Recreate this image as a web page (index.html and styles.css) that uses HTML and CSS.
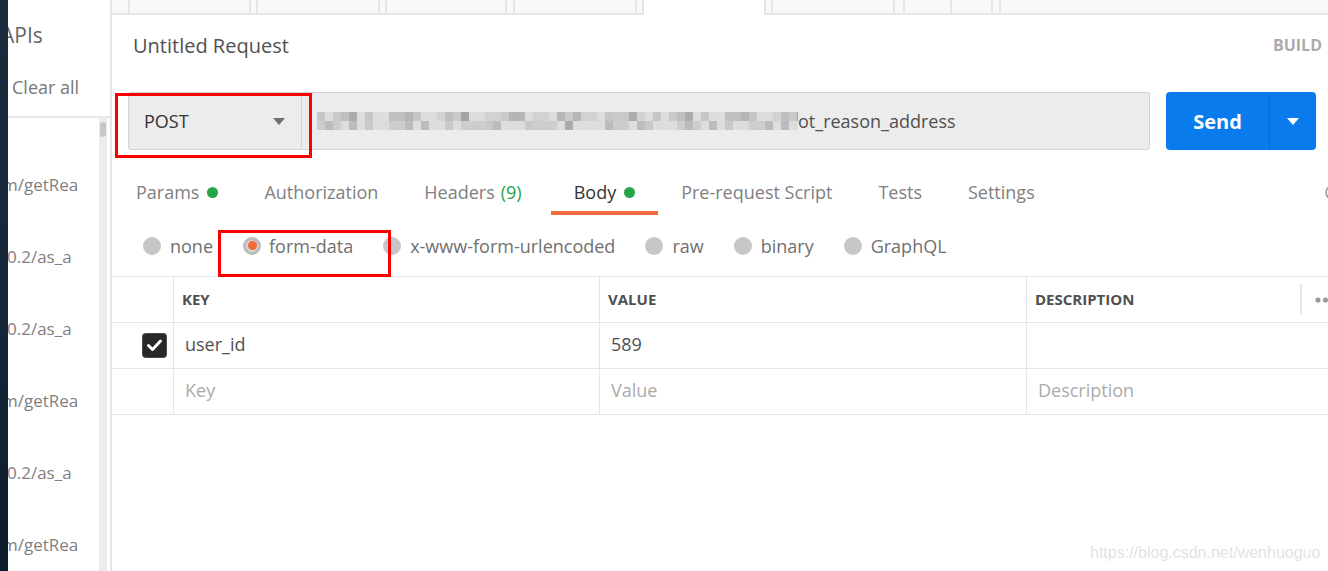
FILE: index.html
```html
<!DOCTYPE html>
<html lang="en">
<head>
    <meta charset="UTF-8">
    <meta name="viewport" content="width=device-width, initial-scale=1.0">
    <title>Untitled Request</title>
    <link rel="stylesheet" href="styles.css">
</head>
<body>
    <div class="app">
        <div class="edge"></div>

        <!-- historial a la izquierda -->
        <aside class="sidebar">
            <div class="side-head">
                <div class="side-title">APIs</div>
                <div class="side-clear">Clear all</div>
            </div>
            <div class="side-body">
                <ul class="history">
                    <li class="h-get">m/getRea</li>
                    <li class="h-as">0.2/as_a</li>
                    <li class="h-as">0.2/as_a</li>
                    <li class="h-get">m/getRea</li>
                    <li class="h-as">0.2/as_a</li>
                    <li class="h-get">m/getRea</li>
                </ul>
                <div class="scroll-track"><div class="scroll-thumb"></div></div>
            </div>
        </aside>

        <main class="main">
            <div class="tabstrip">
                <div class="ftab w123"></div>
                <div class="ftab w124"></div>
                <div class="ftab w122"></div>
                <div class="ftab w124"></div>
                <div class="ftab w124 active"></div>
                <div class="ftab w124 gap8"></div>
                <div class="ftab w90 split"></div>
                <div class="ftab rest"></div>
            </div>

            <div class="title-row">
                <h1>Untitled Request</h1>
                <span class="build">BUILD</span>
            </div>

            <div class="url-row">
                <div class="method">POST <span class="caret"></span></div>
                <div class="url"><span class="mosaic"></span><span>ot_reason_address</span></div>
                <div class="send">
                    <span class="send-label">Send</span>
                    <span class="send-more"><span class="caret white"></span></span>
                </div>
            </div>

            <nav class="req-tabs">
                <span class="rtab">Params <i class="dot"></i></span>
                <span class="rtab">Authorization</span>
                <span class="rtab headers">Headers <em class="count">(9)</em></span>
                <span class="rtab active">Body <i class="dot"></i></span>
                <span class="rtab">Pre-request Script</span>
                <span class="rtab">Tests</span>
                <span class="rtab">Settings</span>
                <span class="cookies">Cookies</span>
            </nav>

            <div class="body-types">
                <label class="btype"><span class="radio"></span>none</label>
                <label class="btype"><span class="radio on"></span>form-data</label>
                <label class="btype"><span class="radio"></span>x-www-form-urlencoded</label>
                <label class="btype"><span class="radio"></span>raw</label>
                <label class="btype"><span class="radio"></span>binary</label>
                <label class="btype"><span class="radio"></span>GraphQL</label>
            </div>

            <div class="kv">
                <div class="kv-row head">
                    <div></div>
                    <div>KEY</div>
                    <div>VALUE</div>
                    <div class="last">DESCRIPTION</div>
                    <div class="opts">
                        <svg width="26" height="6" viewBox="0 0 26 6"><circle cx="3" cy="3" r="2.6"/><circle cx="10.5" cy="3" r="2.6"/><circle cx="18" cy="3" r="2.6"/></svg>
                    </div>
                </div>
                <div class="kv-row">
                    <div class="check-cell">
                        <span class="check">
                            <svg width="23" height="23" viewBox="0 0 23 23"><polyline points="5.5,11.5 9.5,15.5 17.5,7" fill="none" stroke="#fff" stroke-width="3" stroke-linecap="round" stroke-linejoin="round"/></svg>
                        </span>
                    </div>
                    <div>user_id</div>
                    <div>589</div>
                    <div class="last"></div>
                    <div class="blank"></div>
                </div>
                <div class="kv-row">
                    <div></div>
                    <div class="ph">Key</div>
                    <div class="ph">Value</div>
                    <div class="ph last">Description</div>
                    <div class="blank"></div>
                </div>
            </div>
        </main>
    </div>

    <div class="mark mark-method"></div>
    <div class="mark mark-form"></div>
    <div class="watermark">https://blog.csdn.net/wenhuoguo</div>
</body>
</html>
```

FILE: styles.css
```css
* {
    box-sizing: border-box;
}
body {
    width: 1328px;
    height: 571px;
    margin: 0;
    overflow: hidden;
    position: relative;
    font-family: "Open Sans", "DejaVu Sans", sans-serif;
    background-color: #ffffff;
}
.app {
    display: flex;
    height: 571px;
}
.edge {
    width: 8px;
    flex: none;
    background: linear-gradient(#1b2b3e, #15263b 55%, #0e1b2b);
}

/* Barra lateral */
.sidebar {
    width: 104px;
    flex: none;
    display: flex;
    flex-direction: column;
    overflow: hidden;
    border-right: 2px solid #e6e6e6;
}
.side-head {
    height: 118px;
    flex: none;
    border-bottom: 2px solid #e8e8e8;
}
.side-title {
    margin: 21px 0 0 -7px;
    font-size: 21px;
    line-height: 28px;
    color: #666666;
}
.side-clear {
    margin: 26px 0 0 4px;
    font-size: 18px;
    line-height: 24px;
    color: #777777;
}
.side-body {
    flex: 1;
    display: flex;
}
.history {
    list-style: none;
    margin: 0;
    padding: 31px 0 0;
    flex: 1;
    min-width: 0;
    overflow: hidden;
}
.history li {
    font-size: 17px;
    line-height: 72px;
    color: #808080;
    white-space: nowrap;
}
.history li.h-get {
    margin-left: -6px;
}
.history li.h-as {
    margin-left: -1px;
}
.scroll-track {
    width: 8px;
    flex: none;
    margin-right: 3px;
    padding-top: 4px;
    background-color: #ececec;
}
.scroll-thumb {
    height: 15px;
    margin: 0 1px;
    border-radius: 3px;
    background-color: #c8c8c8;
}

/* Zona principal */
.main {
    flex: 1;
    min-width: 0;
    display: flex;
    flex-direction: column;
    overflow: hidden;
}
.tabstrip {
    display: flex;
    height: 15px;
    flex: none;
    padding-left: 16px;
    background-color: #f8f8f8;
    box-shadow: inset 0 -2px #e6e6e6;
}
.ftab {
    flex: none;
    margin-right: 5px;
    border-left: 2px solid #e6e6e6;
    border-right: 2px solid #e6e6e6;
}
.ftab.w123 { width: 123px; }
.ftab.w124 { width: 124px; }
.ftab.w122 { width: 122px; margin-right: 6px; }
.ftab.w90 { width: 90px; margin-right: 6px; }
.ftab.gap8 { margin-right: 8px; }
.ftab.active {
    background-color: #ffffff;
    border-radius: 0 0 2px 2px;
}
.ftab.split {
    background: linear-gradient(90deg, transparent 45px, #e6e6e6 45px, #e6e6e6 47px, transparent 47px);
}
.ftab.rest {
    flex: 1;
    border-right: none;
    margin-right: 0;
}

.title-row {
    height: 60px;
    flex: none;
    display: flex;
    align-items: center;
    justify-content: space-between;
    padding: 0 6px 0 21px;
}
.title-row h1 {
    margin: 0;
    font-size: 20px;
    font-weight: 400;
    color: #505050;
}
.build {
    font-size: 16px;
    font-weight: 700;
    color: #ababab;
}

.url-row {
    display: flex;
    height: 58px;
    flex: none;
    margin: 17px 12px 0 16px;
}
.method {
    width: 174px;
    display: flex;
    align-items: center;
    justify-content: space-between;
    padding: 0 16px 0 15px;
    background-color: #ececec;
    border: 1px solid #d4d4d4;
    border-radius: 3px 0 0 3px;
    font-size: 18px;
    color: #333333;
}
.caret {
    width: 0;
    height: 0;
    border-left: 6px solid transparent;
    border-right: 6px solid transparent;
    border-top: 7px solid #707070;
}
.caret.white {
    border-top-color: #ffffff;
}
.url {
    flex: 1;
    display: flex;
    align-items: center;
    margin-right: 16px;
    padding-left: 15px;
    background-color: #ececec;
    border: 1px solid #d4d4d4;
    border-left: none;
    border-radius: 0 3px 3px 0;
    font-size: 18px;
    color: #505050;
}
.mosaic {
    width: 481px;
    height: 18px;
    flex: none;
    background:
        repeating-linear-gradient(90deg, rgba(0,0,0,.10) 0 8px, transparent 8px 24px, rgba(0,0,0,.05) 24px 40px, transparent 40px 48px) top / 100% 9px no-repeat,
        repeating-linear-gradient(90deg, transparent 0 16px, rgba(0,0,0,.09) 16px 32px, rgba(0,0,0,.18) 32px 40px, transparent 40px 56px) top / 100% 9px no-repeat,
        repeating-linear-gradient(90deg, rgba(0,0,0,.07) 0 24px, transparent 24px 32px, rgba(0,0,0,.15) 32px 40px, transparent 40px 72px) bottom / 100% 9px no-repeat,
        repeating-linear-gradient(90deg, transparent 0 8px, rgba(0,0,0,.09) 8px 16px, transparent 16px 40px) bottom / 100% 9px no-repeat,
        #dddddd;
}
.send {
    width: 150px;
    flex: none;
    display: flex;
    border-radius: 4px;
    background-color: #097bed;
    color: #ffffff;
}
.send-label {
    width: 104px;
    display: flex;
    align-items: center;
    justify-content: center;
    border-right: 1px solid #0a6dd2;
    font-size: 20px;
    font-weight: 700;
}
.send-more {
    flex: 1;
    display: flex;
    align-items: center;
    justify-content: center;
}

/* Pestañas de la petición */
.req-tabs {
    display: flex;
    flex: none;
    margin-top: 16px;
    padding-left: 1px;
}
.rtab {
    display: flex;
    align-items: center;
    padding: 14px 23px 7px;
    border-bottom: 4px solid transparent;
    font-size: 18px;
    line-height: 24px;
    color: #808080;
    white-space: nowrap;
}
.rtab.active {
    color: #333333;
    border-bottom-color: #f26b3a;
}
.rtab.headers {
    padding-right: 29px;
}
.count {
    font-style: normal;
    margin-left: 6px;
    color: #26a547;
}
.dot {
    width: 11px;
    height: 11px;
    margin-left: 8px;
    border-radius: 50%;
    background-color: #26a547;
}
.cookies {
    margin-left: auto;
    margin-right: -62px;
    padding-top: 14px;
    font-size: 18px;
    line-height: 24px;
    color: #9a9a9a;
}

.body-types {
    display: flex;
    align-items: center;
    height: 61px;
    flex: none;
    padding-left: 31px;
}
.btype {
    display: flex;
    align-items: center;
    margin-right: 30px;
    font-size: 18px;
    color: #707070;
}
.radio {
    width: 18px;
    height: 18px;
    margin-right: 9px;
    border-radius: 50%;
    background-color: #c6c6c6;
}
.radio.on {
    display: flex;
    align-items: center;
    justify-content: center;
    background-color: #d6d6d6;
    border: 3px solid #bcbcbc;
    margin-right: 8px;
}
.radio.on::after {
    content: "";
    width: 9px;
    height: 9px;
    border-radius: 50%;
    background-color: #f26b3a;
}

/* Tabla clave / valor */
.kv {
    border-top: 1px solid #e6e6e6;
}
.kv-row {
    display: grid;
    grid-template-columns: 62px 426px 427px 273px 1fr;
    height: 46px;
    border-bottom: 1px solid #e6e6e6;
}
.kv-row > div {
    display: flex;
    align-items: center;
    padding: 0 0 3px 11px;
    border-right: 1px solid #e6e6e6;
    font-size: 18px;
    color: #505050;
    white-space: nowrap;
}
.kv-row > div.last,
.kv-row > div.blank,
.kv-row > div.opts {
    border-right: none;
}
.kv-row.head > div {
    padding: 0 0 2px 8px;
    font-size: 15px;
    font-weight: 700;
    color: #505050;
}
.kv-row.head > div.opts {
    padding: 0 0 0 13px;
    margin: 7px 0;
    border-left: 2px solid #e6e6e6;
}
.opts svg {
    fill: #9a9a9a;
    flex: none;
}
.kv-row > div.ph {
    color: #ababab;
}
.kv-row > div.check-cell {
    justify-content: flex-end;
    padding: 0 7px 0 0;
}
.check {
    width: 23px;
    height: 23px;
    border-radius: 3px;
    background-color: #282828;
    box-shadow: 0 0 0 1px #4a4a4a;
}
.check svg {
    display: block;
}

/* Recuadros rojos de la captura */
.mark {
    position: absolute;
    border: 3px solid #ff0000;
}
.mark-method {
    left: 115px;
    top: 93px;
    width: 197px;
    height: 65px;
}
.mark-form {
    left: 218px;
    top: 230px;
    width: 173px;
    height: 47px;
}
.watermark {
    position: absolute;
    left: 1090px;
    top: 543px;
    font-family: "Liberation Sans", Arial, sans-serif;
    font-size: 16px;
    line-height: 20px;
    color: #e3e3e3;
}
```
